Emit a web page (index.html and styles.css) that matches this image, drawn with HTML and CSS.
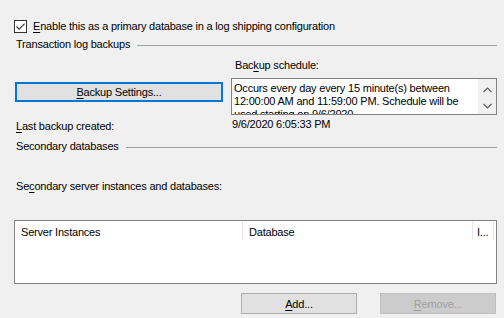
FILE: index.html
```html
<!DOCTYPE html>
<html lang="en">
<head>
  <meta charset="UTF-8">
  <title>Transaction Log Shipping</title>
  <link rel="stylesheet" href="styles.css">
</head>
<body>
  <div class="page">
    <label class="check-row">
      <span class="checkbox">
        <svg width="11" height="11" viewBox="0 0 11 11"><path d="M1.5 5.5 L4.2 8.2 L9.6 2.6" fill="none" stroke="#333" stroke-width="1.1"/></svg>
      </span>
      <span><u>E</u>nable this as a primary database in a log shipping configuration</span>
    </label>

    <div class="section-title">Transaction log backups</div>

    <div class="backup-grid">
      <div class="backup-left">
        <button class="btn btn-focus"><u>B</u>ackup Settings...</button>
      </div>
      <div class="backup-right">
        <div class="schedule-label">Bac<u>k</u>up schedule:</div>
        <div class="schedule-box">
          <div class="schedule-text">
            Occurs every day every 15 minute(s) between<br>
            12:00:00 AM and 11:59:00 PM. Schedule will be<br>
            used starting on 9/6/2020.
          </div>
          <div class="scroll">
            <svg width="9" height="6" viewBox="0 0 9 6"><path d="M0.5 5 L4.5 1 L8.5 5" fill="none" stroke="#606060" stroke-width="1.2"/></svg>
            <svg width="9" height="6" viewBox="0 0 9 6"><path d="M0.5 1 L4.5 5 L8.5 1" fill="none" stroke="#606060" stroke-width="1.2"/></svg>
          </div>
        </div>
      </div>
      <div class="last-label"><u>L</u>ast backup created:</div>
      <div class="last-value">9/6/2020 6:05:33 PM</div>
    </div>

    <div class="section-title section-secondary">Secondary databases</div>

    <div class="list-label">Se<u>c</u>ondary server instances and databases:</div>

    <div class="list-box">
      <div class="list-head">
        <div class="col col-server">Server Instances</div>
        <div class="col col-db">Database</div>
        <div class="col col-i">I...</div>
      </div>
    </div>

    <div class="actions">
      <button class="btn btn-small"><u>A</u>dd...</button>
      <button class="btn btn-small btn-disabled" disabled><u>R</u>emove...</button>
    </div>
  </div>
</body>
</html>
```

FILE: styles.css
```css
body {
  margin: 0;
  background-color: #f0f0f0;
  font-family: "Liberation Sans", Arial, sans-serif;
  font-size: 11px;
  letter-spacing: -0.2px;
  line-height: 15px;
  color: #000;
}

u {
  text-underline-offset: 2px;
}

.page {
  padding: 19px 7px 0 14px;
}

.check-row {
  display: flex;
  align-items: center;
  gap: 6px;
  height: 15px;
}

.checkbox {
  width: 11px;
  height: 11px;
  border: 1px solid #333;
  background-color: #fff;
  display: flex;
}

.section-title {
  display: flex;
  align-items: center;
  gap: 7px;
  margin: 3px 0 0 2px;
}

.section-title::after {
  content: "";
  flex: 1;
  border-top: 1px solid #a0a0a0;
  margin-top: 1px;
}

.backup-grid {
  display: grid;
  grid-template-columns: 217px 266px;
  margin-top: 6px;
}

.backup-left {
  padding: 24px 0 0 1px;
}

.btn {
  font-family: inherit;
  font-size: 11px;
  letter-spacing: -0.2px;
  color: #000;
  background-color: #e1e1e1;
  border: 1px solid #adadad;
  padding: 0;
  margin: 0;
}

.btn-focus {
  width: 208px;
  height: 20px;
  border: 2px solid #0078d7;
}

.schedule-label {
  padding-left: 4px;
}

.schedule-box {
  margin-top: 5px;
  height: 35px;
  border: 1px solid #828282;
  background-color: #fff;
  display: flex;
  overflow: hidden;
}

.schedule-text {
  flex: 1;
  padding: 3px 0 0 2px;
  line-height: 13px;
  white-space: nowrap;
  overflow: hidden;
}

.scroll {
  width: 18px;
  background-color: #f0f0f0;
  display: flex;
  flex-direction: column;
  align-items: center;
  justify-content: space-between;
  padding: 8px 0 5px;
}

.last-label {
  margin: 4px 0 0 2px;
}

.last-value {
  margin: 2px 0 0 1px;
}

.section-secondary {
  margin-top: 5px;
}

.list-label {
  margin: 25px 0 0 2px;
}

.list-box {
  margin-top: 26px;
  height: 62px;
  border: 1px solid #828282;
  background-color: #fff;
}

.list-head {
  display: grid;
  grid-template-columns: 228px 230px 21px;
  height: 19px;
}

.col {
  border-right: 1px solid #e5e5e5;
  padding: 4px 0 0 6px;
  white-space: nowrap;
  overflow: hidden;
}

.col-i {
  padding-left: 4px;
}

.actions {
  display: flex;
  justify-content: flex-end;
  gap: 23px;
  margin: 9px 1px 0 0;
}

.btn-small {
  width: 116px;
  height: 21px;
}

.btn-disabled {
  background-color: #cccccc;
  border-color: #bfbfbf;
  color: #a0a0a0;
}
```
